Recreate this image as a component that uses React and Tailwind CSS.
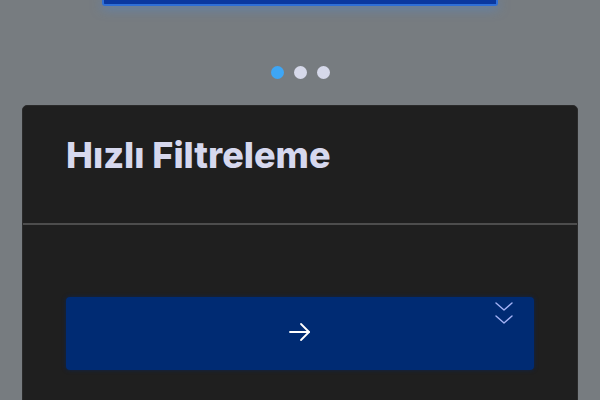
import React, { useState } from "react";

const ArrowIcon = () => (
  <svg width="22" height="22" viewBox="0 0 22 22" fill="none" stroke="currentColor" strokeWidth="1.8" strokeLinecap="round" strokeLinejoin="round">
    <path d="M1 11h19" />
    <path d="M12 3l8 8-8 8" />
  </svg>
);

const DoubleChevron = () => (
  <svg width="18" height="24" viewBox="0 0 18 24" fill="none" stroke="currentColor" strokeWidth="1.4" strokeLinecap="round" strokeLinejoin="round">
    <path d="M1 2l8 7 8-7" />
    <path d="M1 15l8 7 8-7" />
  </svg>
);

const App = () => {
  const [active, setActive] = useState(0);

  return (
    <div className="min-h-screen bg-[#777c80] flex flex-col items-center overflow-hidden" style={{ fontFamily: "Inter, 'Noto Sans', sans-serif" }}>
      {/* Top button (mostly scrolled away) */}
      <div className="w-[396px] h-[6px] bg-[#0a38a0] border-x-2 border-b-2 border-[#2f6fd6] rounded-b-[3px] shadow-[0_2px_12px_rgba(70,140,230,0.6)]" />

      {/* Carousel dots */}
      <div className="mt-[60px] flex gap-[10px]">
        {[0, 1, 2].map((i) => (
          <button
            key={i}
            onClick={() => setActive(i)}
            className={`w-[13px] h-[13px] rounded-full ${active === i ? "bg-[#3ea6f5]" : "bg-[#d6d9ea]"}`}
          />
        ))}
      </div>

      {/* Quick filter card */}
      <div className="mt-[26px] w-[556px] bg-[#1f1f1f] rounded-t-[5px] border border-[#2a2a2a]">
        <div className="h-[119px] border-b-2 border-[#4d4d4d] px-[43px] pt-[31px]">
          <h2 className="text-[36px] leading-none font-extrabold text-[#d6d8ee]">
            Hızlı Filtreleme
          </h2>
        </div>

        <div className="px-[43px] pt-[72px] pb-[40px]">
          <button className="relative w-full h-[73px] bg-[#002b73] rounded-[4px] flex items-center justify-center text-white shadow-[0_0_4px_rgba(0,40,110,0.6)]">
            <span className="-mt-[4px]">
              <ArrowIcon />
            </span>
            <span className="absolute right-[21px] top-[4px] text-[#a3b2f5]">
              <DoubleChevron />
            </span>
          </button>
        </div>
      </div>
    </div>
  );
};

export default App;
